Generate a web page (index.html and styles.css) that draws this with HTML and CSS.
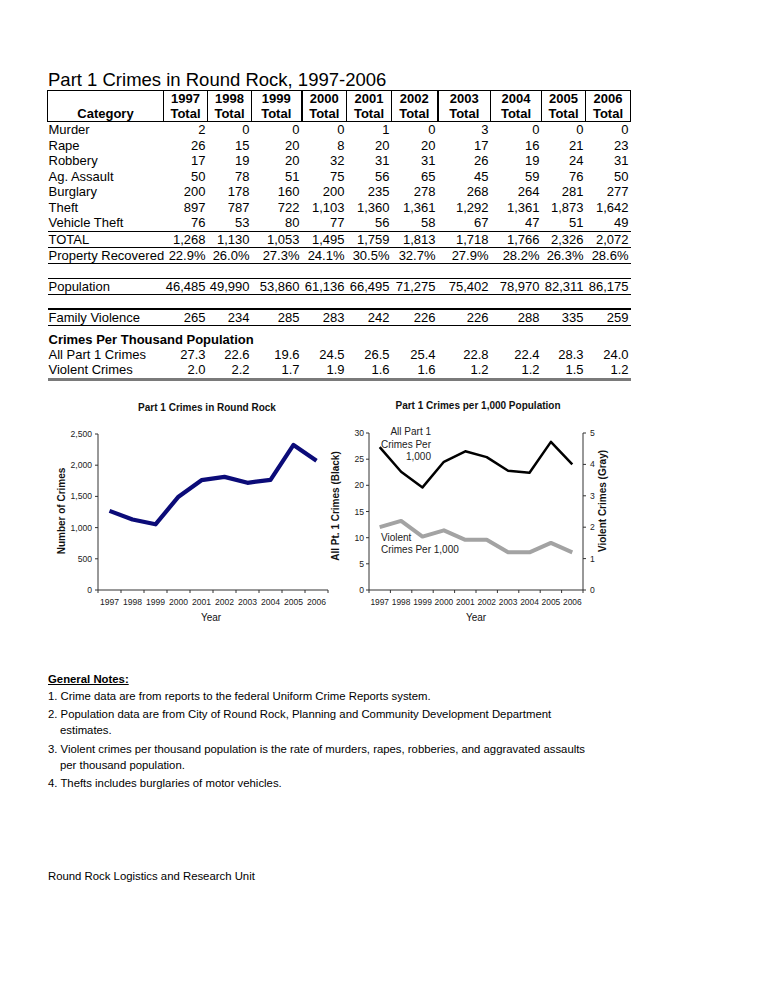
FILE: index.html
```html
<!DOCTYPE html>
<html lang="en">
<head>
<meta charset="utf-8">
<title>Part 1 Crimes in Round Rock, 1997-2006</title>
<link rel="stylesheet" href="styles.css">
</head>
<body>
<div class="page">
  <h1 class="title">Part 1 Crimes in Round Rock, 1997-2006</h1>

  <table class="crimes">
    <colgroup>
      <col class="c-cat"><col class="c44"><col class="c44"><col class="c50"><col class="c45"><col class="c45"><col class="c46"><col class="c53"><col class="c51"><col class="c44"><col class="c45">
    </colgroup>
    <thead>
      <tr>
        <th class="cat">Category</th>
        <th>1997<br>Total</th>
        <th>1998<br>Total</th>
        <th>1999<br>Total</th>
        <th class="thick">2000<br>Total</th>
        <th>2001<br>Total</th>
        <th>2002<br>Total</th>
        <th class="thick">2003<br>Total</th>
        <th>2004<br>Total</th>
        <th>2005<br>Total</th>
        <th>2006<br>Total</th>
      </tr>
    </thead>
    <tbody>
      <tr><td class="label">Murder</td><td>2</td><td>0</td><td>0</td><td>0</td><td>1</td><td>0</td><td>3</td><td>0</td><td>0</td><td>0</td></tr>
      <tr><td class="label">Rape</td><td>26</td><td>15</td><td>20</td><td>8</td><td>20</td><td>20</td><td>17</td><td>16</td><td>21</td><td>23</td></tr>
      <tr><td class="label">Robbery</td><td>17</td><td>19</td><td>20</td><td>32</td><td>31</td><td>31</td><td>26</td><td>19</td><td>24</td><td>31</td></tr>
      <tr><td class="label">Ag. Assault</td><td>50</td><td>78</td><td>51</td><td>75</td><td>56</td><td>65</td><td>45</td><td>59</td><td>76</td><td>50</td></tr>
      <tr><td class="label">Burglary</td><td>200</td><td>178</td><td>160</td><td>200</td><td>235</td><td>278</td><td>268</td><td>264</td><td>281</td><td>277</td></tr>
      <tr><td class="label">Theft</td><td>897</td><td>787</td><td>722</td><td>1,103</td><td>1,360</td><td>1,361</td><td>1,292</td><td>1,361</td><td>1,873</td><td>1,642</td></tr>
      <tr><td class="label">Vehicle Theft</td><td>76</td><td>53</td><td>80</td><td>77</td><td>56</td><td>58</td><td>67</td><td>47</td><td>51</td><td>49</td></tr>
      <tr class="total"><td class="label">TOTAL</td><td>1,268</td><td>1,130</td><td>1,053</td><td>1,495</td><td>1,759</td><td>1,813</td><td>1,718</td><td>1,766</td><td>2,326</td><td>2,072</td></tr>
      <tr class="boxed"><td class="label">Property Recovered</td><td>22.9%</td><td>26.0%</td><td>27.3%</td><td>24.1%</td><td>30.5%</td><td>32.7%</td><td>27.9%</td><td>28.2%</td><td>26.3%</td><td>28.6%</td></tr>
      <tr class="spacer"><td colspan="11"></td></tr>
      <tr class="boxed"><td class="label">Population</td><td>46,485</td><td>49,990</td><td>53,860</td><td>61,136</td><td>66,495</td><td>71,275</td><td>75,402</td><td>78,970</td><td>82,311</td><td>86,175</td></tr>
      <tr class="spacer spacer-sm"><td colspan="11"></td></tr>
      <tr class="boxed heavy"><td class="label">Family Violence</td><td>265</td><td>234</td><td>285</td><td>283</td><td>242</td><td>226</td><td>226</td><td>288</td><td>335</td><td>259</td></tr>
      <tr class="section"><td colspan="11">Crimes Per Thousand Population</td></tr>
      <tr><td class="label">All Part 1 Crimes</td><td>27.3</td><td>22.6</td><td>19.6</td><td>24.5</td><td>26.5</td><td>25.4</td><td>22.8</td><td>22.4</td><td>28.3</td><td>24.0</td></tr>
      <tr class="last"><td class="label">Violent Crimes</td><td>2.0</td><td>2.2</td><td>1.7</td><td>1.9</td><td>1.6</td><td>1.6</td><td>1.2</td><td>1.2</td><td>1.5</td><td>1.2</td></tr>
    </tbody>
  </table>

  <div class="charts">
    <svg class="chart chart-left" width="282" height="232" viewBox="0 0 282 232">
      <text class="chart-title" x="160" y="15" text-anchor="middle">Part 1 Crimes in Round Rock</text>
      <line class="axis" x1="51" y1="38" x2="51" y2="194"/>
      <line class="axis" x1="51" y1="194" x2="281" y2="194"/>
      <g class="axis">
        <line x1="48" y1="38" x2="51" y2="38"/>
        <line x1="48" y1="69.2" x2="51" y2="69.2"/>
        <line x1="48" y1="100.4" x2="51" y2="100.4"/>
        <line x1="48" y1="131.6" x2="51" y2="131.6"/>
        <line x1="48" y1="162.8" x2="51" y2="162.8"/>
        <line x1="48" y1="194" x2="51" y2="194"/>
        <line x1="51" y1="194" x2="51" y2="197"/>
        <line x1="74" y1="194" x2="74" y2="197"/>
        <line x1="97" y1="194" x2="97" y2="197"/>
        <line x1="120" y1="194" x2="120" y2="197"/>
        <line x1="143" y1="194" x2="143" y2="197"/>
        <line x1="166" y1="194" x2="166" y2="197"/>
        <line x1="189" y1="194" x2="189" y2="197"/>
        <line x1="212" y1="194" x2="212" y2="197"/>
        <line x1="235" y1="194" x2="235" y2="197"/>
        <line x1="258" y1="194" x2="258" y2="197"/>
        <line x1="281" y1="194" x2="281" y2="197"/>
      </g>
      <g class="tick" text-anchor="end">
        <text x="45" y="41">2,500</text>
        <text x="45" y="72.2">2,000</text>
        <text x="45" y="103.4">1,500</text>
        <text x="45" y="134.6">1,000</text>
        <text x="45" y="165.8">500</text>
        <text x="45" y="197">0</text>
      </g>
      <g class="tick" text-anchor="middle">
        <text x="62.5" y="209">1997</text>
        <text x="85.5" y="209">1998</text>
        <text x="108.5" y="209">1999</text>
        <text x="131.5" y="209">2000</text>
        <text x="154.5" y="209">2001</text>
        <text x="177.5" y="209">2002</text>
        <text x="200.5" y="209">2003</text>
        <text x="223.5" y="209">2004</text>
        <text x="246.5" y="209">2005</text>
        <text x="269.5" y="209">2006</text>
      </g>
      <text class="axis-name" x="164" y="225" text-anchor="middle">Year</text>
      <text class="axis-title" transform="translate(18,115) rotate(-90)" text-anchor="middle">Number of Crimes</text>
      <polyline class="line-navy" points="62.5,114.9 85.5,123.5 108.5,128.3 131.5,100.7 154.5,84.2 177.5,80.9 200.5,86.8 223.5,83.8 246.5,48.9 269.5,64.7"/>
    </svg>

    <svg class="chart chart-right" width="301" height="232" viewBox="0 0 301 232">
      <text class="chart-title" x="149" y="13" text-anchor="middle">Part 1 Crimes per 1,000 Population</text>
      <line class="axis" x1="40" y1="37" x2="40" y2="194"/>
      <line class="axis" x1="254" y1="37" x2="254" y2="194"/>
      <line class="axis" x1="40" y1="194" x2="254" y2="194"/>
      <g class="axis">
        <line x1="37" y1="37" x2="40" y2="37"/>
        <line x1="37" y1="63.2" x2="40" y2="63.2"/>
        <line x1="37" y1="89.3" x2="40" y2="89.3"/>
        <line x1="37" y1="115.5" x2="40" y2="115.5"/>
        <line x1="37" y1="141.7" x2="40" y2="141.7"/>
        <line x1="37" y1="167.8" x2="40" y2="167.8"/>
        <line x1="37" y1="194" x2="40" y2="194"/>
        <line x1="254" y1="37" x2="257" y2="37"/>
        <line x1="254" y1="68.4" x2="257" y2="68.4"/>
        <line x1="254" y1="99.8" x2="257" y2="99.8"/>
        <line x1="254" y1="131.2" x2="257" y2="131.2"/>
        <line x1="254" y1="162.6" x2="257" y2="162.6"/>
        <line x1="254" y1="194" x2="257" y2="194"/>
        <line x1="40" y1="194" x2="40" y2="197"/>
        <line x1="61.4" y1="194" x2="61.4" y2="197"/>
        <line x1="82.8" y1="194" x2="82.8" y2="197"/>
        <line x1="104.2" y1="194" x2="104.2" y2="197"/>
        <line x1="125.6" y1="194" x2="125.6" y2="197"/>
        <line x1="147" y1="194" x2="147" y2="197"/>
        <line x1="168.4" y1="194" x2="168.4" y2="197"/>
        <line x1="189.8" y1="194" x2="189.8" y2="197"/>
        <line x1="211.2" y1="194" x2="211.2" y2="197"/>
        <line x1="232.6" y1="194" x2="232.6" y2="197"/>
        <line x1="254" y1="194" x2="254" y2="197"/>
      </g>
      <g class="tick" text-anchor="end">
        <text x="35" y="40">30</text>
        <text x="35" y="66.2">25</text>
        <text x="35" y="92.3">20</text>
        <text x="35" y="118.5">15</text>
        <text x="35" y="144.7">10</text>
        <text x="35" y="170.8">5</text>
        <text x="35" y="197">0</text>
      </g>
      <g class="tick" text-anchor="start">
        <text x="261" y="40">5</text>
        <text x="261" y="71.4">4</text>
        <text x="261" y="102.8">3</text>
        <text x="261" y="134.2">2</text>
        <text x="261" y="165.6">1</text>
        <text x="261" y="197">0</text>
      </g>
      <g class="tick tick-tight" text-anchor="middle">
        <text x="50.7" y="209">1997</text>
        <text x="72.1" y="209">1998</text>
        <text x="93.5" y="209">1999</text>
        <text x="114.9" y="209">2000</text>
        <text x="136.3" y="209">2001</text>
        <text x="157.7" y="209">2002</text>
        <text x="179.1" y="209">2003</text>
        <text x="200.5" y="209">2004</text>
        <text x="221.9" y="209">2005</text>
        <text x="243.3" y="209">2006</text>
      </g>
      <text class="axis-name" x="147" y="225" text-anchor="middle">Year</text>
      <text class="axis-title" transform="translate(9.5,110) rotate(-90)" text-anchor="middle">All Pt. 1 Crimes (Black)</text>
      <text class="axis-title" transform="translate(277,105) rotate(-90)" text-anchor="middle">Violent Crimes (Gray)</text>
      <polyline class="line-gray" points="50.7,131.2 72.1,124.9 93.5,140.6 114.9,134.3 136.3,143.8 157.7,143.8 179.1,156.3 200.5,156.3 221.9,146.9 243.3,156.3"/>
      <polyline class="line-black" points="50.7,51.1 72.1,75.7 93.5,91.4 114.9,65.8 136.3,55.3 157.7,61.1 179.1,74.7 200.5,76.8 221.9,45.9 243.3,68.4"/>
      <g class="note-label" text-anchor="end">
        <text x="102" y="39">All Part 1</text>
        <text x="102" y="51.5">Crimes Per</text>
        <text x="102" y="63.5">1,000</text>
      </g>
      <g class="note-label" text-anchor="start">
        <text x="52" y="144.5">Violent</text>
        <text x="52" y="156.5">Crimes Per 1,000</text>
      </g>
    </svg>
  </div>

  <section class="notes">
    <h2 class="notes-title">General Notes:</h2>
    <ol class="note-list">
      <li>1. Crime data are from reports to the federal Uniform Crime Reports system.</li>
      <li>2. Population data are from City of Round Rock, Planning and Community Development Department<br>estimates.</li>
      <li>3. Violent crimes per thousand population is the rate of murders, rapes, robberies, and aggravated assaults<br>per thousand population.</li>
      <li>4. Thefts includes burglaries of motor vehicles.</li>
    </ol>
  </section>

  <footer class="footer">Round Rock Logistics and Research Unit</footer>
</div>
</body>
</html>
```

FILE: styles.css
```css
html, body {
  margin: 0;
  padding: 0;
  background: #ffffff;
}

body {
  font-family: "Liberation Sans", Arial, Helvetica, sans-serif;
  color: #000000;
}

.page {
  padding: 70px 0 40px 47px;
  width: 583px;
}

.title {
  margin: 0 0 0 1px;
  font-size: 18.5px;
  line-height: 20px;
  font-weight: normal;
  white-space: nowrap;
}

/* ---------- Table ---------- */
.crimes {
  width: 583px;
  table-layout: fixed;
  border-collapse: collapse;
  font-size: 13px;
}

.c-cat { width: 116px; }
.c44 { width: 44px; }
.c45 { width: 45px; }
.c46 { width: 46px; }
.c50 { width: 50px; }
.c51 { width: 51px; }
.c53 { width: 53px; }

.crimes th {
  border: 1px solid #000000;
  padding: 0;
  line-height: 15px;
  height: 30px;
  font-weight: bold;
  text-align: center;
  vertical-align: middle;
}

.crimes th.cat {
  vertical-align: bottom;
}

.crimes th.thick {
  border-left: 2px solid #000000;
}

.crimes td {
  height: 15.5px;
  padding: 0 2px 0 0;
  line-height: 15px;
  text-align: right;
  white-space: nowrap;
  vertical-align: middle;
}

.crimes td.label {
  text-align: left;
  padding-left: 1px;
}

.crimes tr.total td,
.crimes tr.boxed td {
  height: 14px;
  border-top: 1px solid #000000;
  border-bottom: 1px solid #000000;
}

.crimes tr.boxed.heavy td {
  border-top: 2px solid #000000;
}

.crimes tr.spacer td {
  height: 14.5px;
}

.crimes tr.spacer-sm td {
  height: 12.5px;
}

.crimes tr.section td {
  height: 21px;
  vertical-align: bottom;
  text-align: left;
  font-weight: bold;
  padding-left: 1px;
}

.crimes tr.last td {
  border-bottom: 3px solid #7a7a7a;
}

/* ---------- Charts ---------- */
.charts {
  display: flex;
  margin-top: 15px;
  width: 583px;
}

.chart {
  display: block;
  flex: none;
  font-family: "Liberation Sans", Arial, Helvetica, sans-serif;
}

.chart-title {
  font-size: 10px;
  font-weight: bold;
  fill: #111111;
}

.axis,
.axis line {
  stroke: #333333;
  stroke-width: 1;
  fill: none;
}

.tick {
  font-size: 8.6px;
  fill: #222222;
}

.tick-tight {
  font-size: 8.4px;
}

.axis-name {
  font-size: 10px;
  fill: #111111;
}

.axis-title {
  font-size: 10px;
  font-weight: bold;
  fill: #111111;
}

.note-label {
  font-size: 10px;
  fill: #222222;
}

.line-navy {
  fill: none;
  stroke: #0b0b78;
  stroke-width: 4.2;
  stroke-linejoin: round;
  stroke-linecap: butt;
}

.line-black {
  fill: none;
  stroke: #000000;
  stroke-width: 2.5;
  stroke-linejoin: round;
}

.line-gray {
  fill: none;
  stroke: #a3a3a3;
  stroke-width: 4;
  stroke-linejoin: round;
}

/* ---------- Notes ---------- */
.notes {
  margin-top: 43px;
  margin-left: 1px;
  font-size: 11.35px;
  line-height: 16px;
}

.notes-title {
  margin: 0 0 1px;
  font-size: 11.35px;
  line-height: 16px;
  font-weight: bold;
  text-decoration: underline;
}

.note-list {
  list-style: none;
  margin: 0;
  padding: 0;
}

.note-list li {
  padding-left: 12px;
  text-indent: -12px;
  margin-bottom: 2.5px;
  white-space: nowrap;
}

.footer {
  margin-top: 77px;
  margin-left: 1px;
  font-size: 11.35px;
  line-height: 16px;
}
```
